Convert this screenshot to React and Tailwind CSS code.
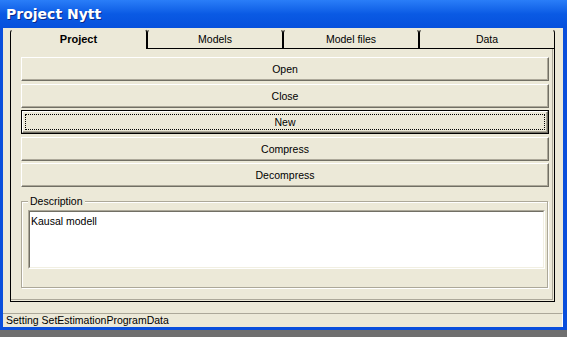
export default function App() {
  const buttons = [
    { label: 'Open', cls: 'mt-0', def: false },
    { label: 'Close', cls: 'mt-[3px]', def: false },
    { label: 'New', cls: 'mt-[2px]', def: true },
    { label: 'Compress', cls: 'mt-[3px]', def: false },
    { label: 'Decompress', cls: 'mt-[2px]', def: false },
  ];
  const tabs = [
    { label: 'Project', w: 'w-[137px]', sel: true },
    { label: 'Models', w: 'w-[136px]', sel: false },
    { label: 'Model files', w: 'w-[136px]', sel: false },
    { label: 'Data', w: 'w-[136px]', sel: false },
  ];
  return (
    <div className="w-[567px] h-[337px] bg-[#6f6f6f] font-['Liberation_Sans',Arial,sans-serif] text-[10.5px] text-black leading-none">
      <div className="w-[567px] h-[330px] bg-[#0a4fdc] flex flex-col pl-[3px] pr-[4px] pb-[3px]">
        <div className="h-[28px] -ml-[3px] -mr-[4px] pl-[6px] pb-[1px] flex items-center bg-gradient-to-b from-[#2a7ef8] via-[#0a5ae4] to-[#0650dd] text-white font-bold text-[14px] font-['DejaVu_Sans',sans-serif] [text-shadow:1px_1px_0_#0a2a8a]">
          Project Nytt
        </div>
        <div className="flex-1 bg-[#ece9d8] flex flex-col">
          <div className="ml-[7px] w-[545px] pt-[1px] flex flex-col">
            <div className="flex h-[20px]">
              {tabs.map((t) => (
                <div
                  key={t.label}
                  className={
                    t.sel
                      ? t.w + ' h-[20px] bg-[#ece9d8] border-l border-r border-t border-black border-t-[#ece9d8] rounded-tl-[4px] rounded-tr-[3px] flex items-center justify-center font-bold text-[11px]'
                      : t.w + ' h-[20px] bg-[#ece9d8] border-l border-r border-b border-black border-t border-t-[#ece9d8] rounded-tl-[4px] rounded-tr-[4px] flex items-center justify-center pt-[1px]'
                  }
                >
                  {t.label}
                </div>
              ))}
            </div>
            <div className="h-[253px] border-l border-r border-b border-black shadow-[inset_-1px_-1px_0_#ece9d8,inset_-2px_-2px_0_#aca899] pl-[10px] pr-[5px] pt-[8px] flex flex-col">
              {buttons.map((b) =>
                b.def ? (
                  <div key={b.label} className={b.cls + ' h-[24px] border border-black'}>
                    <div className="h-full border border-t-white border-l-white border-r-[#716f64] border-b-[#716f64] shadow-[inset_-1px_-1px_0_#aca899] p-[2px]">
                      <div className="h-full border border-dotted border-black flex items-center justify-center">
                        {b.label}
                      </div>
                    </div>
                  </div>
                ) : (
                  <div
                    key={b.label}
                    className={b.cls + ' h-[24px] border border-t-white border-l-white border-r-[#716f64] border-b-[#716f64] shadow-[inset_-1px_-1px_0_#aca899] flex items-center justify-center'}
                  >
                    {b.label}
                  </div>
                )
              )}
              <div className="relative mt-[14px] h-[87px] mr-px border border-[#aca899] shadow-[inset_1px_1px_0_#fff,1px_1px_0_#fff] pl-[6px] pr-[2px] pt-[8px]">
                <div className="absolute -top-[6px] left-[6px] px-[2px] bg-[#ece9d8]">Description</div>
                <div className="h-[59px] border border-t-[#aca899] border-l-[#aca899] border-r-white border-b-white">
                  <div className="h-full bg-white border border-t-[#716f64] border-l-[#716f64] border-r-[#f1efe2] border-b-[#f1efe2] pl-[1px] pt-[4px]">
                    Kausal modell
                  </div>
                </div>
              </div>
            </div>
          </div>
          <div className="mt-[11px] h-[14px] border-t border-[#aca899] border-r border-r-white pl-[3px] flex items-center">
            <div className="h-full flex items-center">Setting SetEstimationProgramData</div>
          </div>
        </div>
      </div>
    </div>
  );
}
